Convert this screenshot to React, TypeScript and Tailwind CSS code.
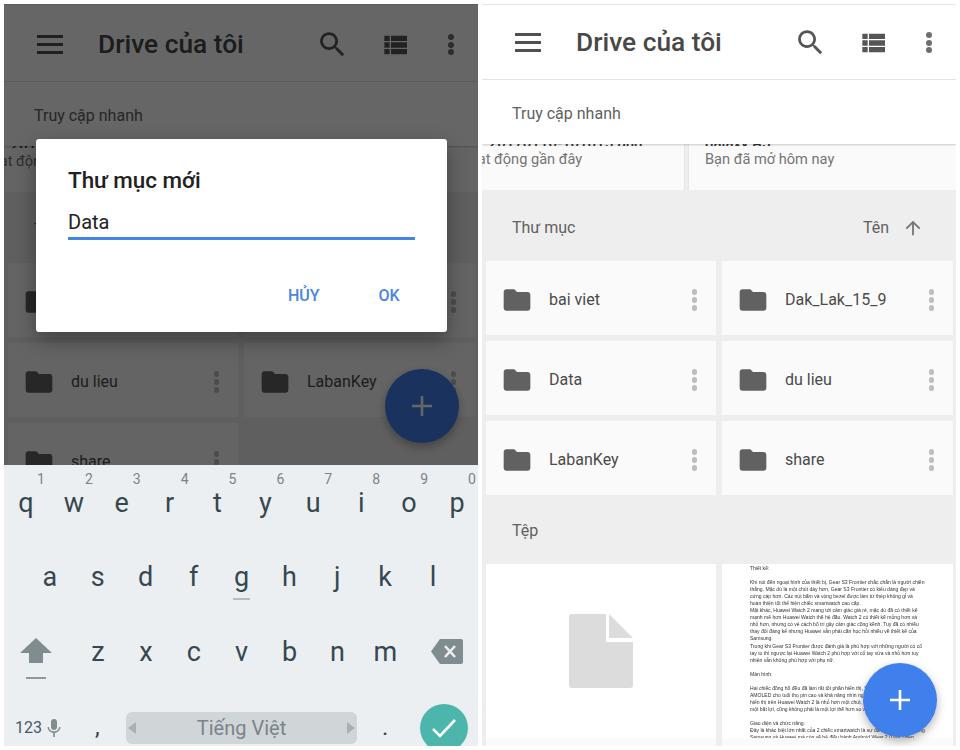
import React from "react";

const FOLDER = "M10 4H4c-1.1 0-1.99.9-1.99 2L2 18c0 1.1.9 2 2 2h16c1.1 0 2-.9 2-2V8c0-1.1-.9-2-2-2h-8l-2-2z";
const SEARCH = "M15.5 14h-.79l-.28-.27C15.41 12.59 16 11.11 16 9.5 16 5.91 13.09 3 9.5 3S3 5.91 3 9.5 5.91 16 9.5 16c1.61 0 3.09-.59 4.23-1.57l.27.28v.79l5 4.99L20.49 19l-4.99-5zm-6 0C7.01 14 5 11.99 5 9.5S7.01 5 9.5 5 14 7.01 14 9.5 11.99 14 9.5 14z";
const LIST = "M4 14h4v-4H4v4zm0 5h4v-4H4v4zM4 9h4V5H4v4zm5 5h12v-4H9v4zm0 5h12v-4H9v4zM9 5v4h12V5H9z";
const UP = "M4 12l1.41 1.41L11 7.83V20h2V7.83l5.58 5.59L20 12l-8-8-8 8z";

const DOC = [
  "Thiết kế:",
  "\u00a0",
  "Khi nói đến ngoại hình của thiết bị, Gear S3 Frontier chắc chắn là người chiến",
  "thắng. Mặc dù là một chút dày hơn, Gear S3 Frontier có kiểu dáng đẹp và",
  "cứng cáp hơn. Các nút bấm và vòng bezel được làm từ thép không gỉ và",
  "hoàn thiện tốt thể hiện chiếc smartwatch cao cấp.",
  "Mặt khác, Huawei Watch 2 mang tới cảm giác giá rẻ, mặc dù đã có thiết kế",
  "mạnh mẽ hơn Huawei Watch thế hệ đầu. Watch 2 có thiết kế mỏng hơn và",
  "nhỏ hơn, nhưng có vẻ cách bố trí gây cảm giác cồng kềnh. Tuy đã có nhiều",
  "thay đổi đáng kể nhưng Huawei vẫn phải cần học hỏi nhiều về thiết kế của",
  "Samsung.",
  "Trong khi Gear S3 Frontier được đánh giá là phù hợp với những người có cổ",
  "tay to thì ngược lại Huawei Watch 2 phù hợp với cổ tay vừa và nhỏ hơn tuy",
  "nhiên vẫn không phù hợp với phụ nữ.",
  "\u00a0",
  "Màn hình:",
  "\u00a0",
  "Hai chiếc đồng hồ đều đã làm rất tốt phần hiển thị, Samsung sử dụng màn hình",
  "AMOLED cho tuổi thọ pin cao và khả năng nhìn ngoài trời tốt. Kích thước",
  "hiển thị trên Huawei Watch 2 là nhỏ hơn một chút, tuy nhiên đây không phải",
  "một bất lợi, cũng không phải là một lợi thế hơn so với đối thủ.",
  "\u00a0",
  "Giao diện và chức năng:",
  "Đây là khác biệt lớn nhất của 2 chiếc smartwatch là sự đa dạng của ứng dụng",
  "Samsung và Huawei mà còn về hệ điều hành Android Wear 2.0 với Tizen.",
];

function Dots({ className }: { className: string }) {
  return (
    <div className="flex flex-col gap-[2.5px]">
      <span className={"block w-[5.5px] h-[5.5px] rounded-full " + className} />
      <span className={"block w-[5.5px] h-[5.5px] rounded-full " + className} />
      <span className={"block w-[5.5px] h-[5.5px] rounded-full " + className} />
    </div>
  );
}

function FolderCard({ name }: { name: string }) {
  return (
    <div className="h-[74px] bg-[#fafafa] flex items-center pl-[15px] pr-[19px] pt-[4px]">
      <svg width="32" height="32" viewBox="0 0 24 24" className="shrink-0 fill-[#616161]">
        <path d={FOLDER} />
      </svg>
      <span className="ml-[16px] text-[16px] text-[#4a4a4a]">{name}</span>
      <div className="ml-auto">
        <Dots className="bg-[#bdbdbd]" />
      </div>
    </div>
  );
}

function Fab({ className }: { className: string }) {
  return (
    <div className={"absolute w-[74px] h-[74px] rounded-full bg-[#3f80ec] flex items-center justify-center shadow-[0_4px_10px_rgba(0,0,0,0.3)] " + className}>
      <svg width="20" height="20" viewBox="0 0 20 20" className="stroke-white" strokeWidth="2.6">
        <path d="M10 0v20M0 10h20" />
      </svg>
    </div>
  );
}

function Drive({ folders, shift }: { folders: string[]; shift: boolean }) {
  return (
    <div className="flex flex-col bg-[#eeeeee]">
      <header className={(shift ? "h-[78px] pt-[3px]" : "h-[76px] pt-[1px]") + " shrink-0 bg-white border-t border-b border-[#e6e6e6] flex items-center pl-[33px] pr-[24px]"}>
        <div className="flex flex-col gap-[5px] w-[26px]">
          <span className="block h-[3px] bg-[#515151]" />
          <span className="block h-[3px] bg-[#515151]" />
          <span className="block h-[3px] bg-[#515151]" />
        </div>
        <h1 className="ml-[35px] text-[26.3px] font-medium text-[#484848] leading-none">Drive của tôi</h1>
        <svg width="33" height="33" viewBox="0 0 24 24" className="ml-[72px] fill-[#555555]"><path d={SEARCH} /></svg>
        <svg width="32" height="32" viewBox="0 0 24 24" className="ml-[30px] fill-[#555555]"><path d={LIST} /></svg>
        <div className="ml-auto">
          <div className="flex flex-col gap-[1.5px]">
            <span className="block w-[6px] h-[6px] rounded-full bg-[#6e6e6e]" />
            <span className="block w-[6px] h-[6px] rounded-full bg-[#6e6e6e]" />
            <span className="block w-[6px] h-[6px] rounded-full bg-[#6e6e6e]" />
          </div>
        </div>
      </header>
      <div className="relative z-10 shrink-0 h-[64px] bg-white flex items-center pl-[30px] pt-[4px] text-[16px] text-[#616161] shadow-[0_1px_2px_rgba(0,0,0,0.2)]">
        Truy cập nhanh
      </div>
      <div className="shrink-0 h-[46px] flex gap-[5px] overflow-hidden">
        <div className="w-[202px] shrink-0 bg-[#fafafa] shadow-[0_1px_1px_rgba(0,0,0,0.2)] overflow-hidden">
          <div className="h-[2px] overflow-hidden">
            <div className="-mt-[12px] text-[15px] font-medium text-[#333333] whitespace-nowrap">_20170110-101015.png</div>
          </div>
          <div className="mt-[3px] -ml-[23px] text-[14.6px] text-[#757575] whitespace-nowrap">Hoạt động gần đây</div>
        </div>
        <div className="flex-1 bg-[#fafafa] shadow-[0_1px_1px_rgba(0,0,0,0.2)] pl-[16px] overflow-hidden">
          <div className="h-[2px] overflow-hidden">
            <div className="-mt-[12px] text-[15px] font-medium text-[#333333] whitespace-nowrap">galaxy A5</div>
          </div>
          <div className="mt-[3px] text-[14.6px] text-[#757575] whitespace-nowrap">Bạn đã mở hôm nay</div>
        </div>
      </div>
      <div className="shrink-0 h-[71px] flex items-center pl-[30px] pr-[32px] pt-[4px] text-[16px] text-[#616161]">
        <span>Thư mục</span>
        <span className="ml-auto">Tên</span>
        <svg width="22" height="22" viewBox="0 0 24 24" className="ml-[13px] fill-[#757575]"><path d={UP} /></svg>
      </div>
      <div className="grid grid-cols-[230px_231px] gap-[6px] pl-[4px] shrink-0">
        {folders.map((f) => (
          <FolderCard key={f} name={f} />
        ))}
      </div>
      <div className="shrink-0 h-[69px] flex items-center pl-[30px] pt-[2px] text-[16px] text-[#616161]">Tệp</div>
      <div className="grid grid-cols-[230px_231px] gap-[6px] pl-[4px] shrink-0">
        <div className="h-[182px] bg-[#fafafa]">
          <div className="h-[174px] bg-white flex items-center justify-center">
            <svg width="64" height="74" viewBox="0 0 64 74" className="fill-[#dcdcdc]">
              <path d="M3 0h34v28h27v43a3 3 0 0 1-3 3H3a3 3 0 0 1-3-3V3a3 3 0 0 1 3-3z" />
              <path d="M40 0l24 24H40z" />
            </svg>
          </div>
        </div>
        <div className="h-[182px] bg-[#fafafa]">
          <div className="h-[174px] bg-white overflow-hidden pl-[28px] pt-[1px] blur-[0.4px]">
            {DOC.map((l, i) => (
              <div key={i} className="h-[7.05px] text-[5.05px] leading-[7.05px] text-[#333333] whitespace-nowrap font-['Liberation_Sans',sans-serif]">
                {l}
              </div>
            ))}
          </div>
        </div>
      </div>
    </div>
  );
}

function KeyCap({ ch, hint, mark }: { ch: string; hint?: string; mark?: boolean }) {
  return (
    <div className="w-[47.9px] shrink-0 flex flex-col items-center">
      {hint && <span className="w-full text-right pr-[5px] text-[14px] leading-[16px] text-[#78848a]">{hint}</span>}
      <span className="text-[27px] leading-[32px] text-[#37474f]">{ch}</span>
      {mark && <span className="block w-[17px] h-[2px] bg-[#b4bcc0] mt-[5px]" />}
    </div>
  );
}

function Keyboard() {
  const top = "qwertyuiop".split("");
  const nums = "1234567890".split("");
  return (
    <div className="h-[281px] bg-[#eceff1] flex flex-col overflow-hidden">
      <div className="h-[75px] shrink-0 flex -ml-[2px] pt-[6px]">
        {top.map((c, i) => (
          <KeyCap key={c} ch={c} hint={nums[i]} />
        ))}
      </div>
      <div className="h-[75px] shrink-0 flex pl-[22px] pt-[21px]">
        {"asdfghjkl".split("").map((c) => (
          <KeyCap key={c} ch={c} mark={c === "g"} />
        ))}
      </div>
      <div className="h-[75px] shrink-0 flex pt-[21px]">
        <div className="w-[70px] shrink-0 flex flex-col items-center pr-[7px] pt-[2px]">
          <svg width="32" height="26" viewBox="0 0 32 26" className="fill-[#7f8c90]"><path d="M16 0l16 15H23v10H9V15H0z" /></svg>
          <span className="block w-[20px] h-[2px] bg-[#8e999d] mt-[13px]" />
        </div>
        {"zxcvbnm".split("").map((c) => (
          <KeyCap key={c} ch={c} />
        ))}
        <div className="flex-1 flex justify-end pr-[15px] pt-[3px]">
          <svg width="32" height="25" viewBox="0 0 32 25">
            <path className="fill-[#7f8c90]" d="M9 0h21a2 2 0 0 1 2 2v21a2 2 0 0 1-2 2H9L0 12.500z" />
            <path d="M14 7l10 11M24 7L14 18" className="stroke-[#eceff1]" strokeWidth="2.6" />
          </svg>
        </div>
      </div>
      <div className="h-[56px] shrink-0 flex">
        <div className="w-[122px] shrink-0 pl-[11px] pt-[28px] flex items-start">
          <span className="text-[16px] leading-[20px] text-[#455a64]">123</span>
          <svg width="14" height="18" viewBox="0 0 14 18" className="ml-[5px] mt-[1px] fill-[#7f8c90]">
            <path d="M7 11a3 3 0 0 0 3-3V3a3 3 0 0 0-6 0v5a3 3 0 0 0 3 3z" />
            <path d="M12 8c0 2.700-2.300 4.300-5 4.300S2 10.700 2 8H.6c0 3.200 2.600 5.500 5.600 5.900V18h1.600v-4.100c3-.4 5.600-2.700 5.600-5.900z" />
          </svg>
          <span className="ml-[34px] -mt-[3px] text-[24px] leading-[24px] text-[#37474f]">,</span>
        </div>
        <div className="w-[231px] h-[32px] shrink-0 mt-[22px] rounded-[6px] bg-[#d0d5d8] flex items-center justify-between px-[2px]">
          <svg width="8" height="12" viewBox="0 0 8 12" className="fill-[#a9b1b5]"><path d="M8 0v12L0 6z" /></svg>
          <span className="text-[20px] text-[#78848a]">Tiếng Việt</span>
          <svg width="8" height="12" viewBox="0 0 8 12" className="fill-[#a9b1b5]"><path d="M0 0v12l8-6z" /></svg>
        </div>
        <span className="ml-[25px] w-[12px] mt-[25px] text-[24px] leading-[24px] text-[#37474f]">.</span>
        <div className="ml-[26px] mt-[14px] w-[48px] h-[48px] shrink-0 rounded-full bg-[#4db6ac] flex items-center justify-center">
          <svg width="24" height="20" viewBox="0 0 24 20" className="stroke-white fill-none" strokeWidth="2.6"><path d="M1 11l7 7L23 2" /></svg>
        </div>
      </div>
    </div>
  );
}

export default function App() {
  return (
    <div className="w-[960px] h-[750px] bg-white pt-[4px] pl-[4px] flex gap-[4px] overflow-hidden font-['Roboto',sans-serif]">
      <div className="w-[474px] h-[742px] flex flex-col overflow-hidden">
        <div className="relative h-[461px] shrink-0 overflow-hidden">
          <Drive shift folders={["bai viet", "Dak_Lak_15_9", "du lieu", "LabanKey", "share"]} />
          <Fab className="left-[381px] top-[365px]" />
          <div className="absolute inset-0 z-20 bg-black/60" />
          <div className="absolute z-30 left-[32px] top-[135px] w-[411px] h-[193px] bg-white rounded-[3px] shadow-[0_8px_20px_rgba(0,0,0,0.35)] pl-[32px] pr-[32px] flex flex-col">
            <div className="mt-[25px] text-[22.4px] leading-[32px] font-medium text-[#212121]">Thư mục mới</div>
            <div className="mt-[11px] pt-[2px] text-[20px] leading-[26px] text-[#212121] border-b-[3px] border-[#4285e4] h-[33px]">Data</div>
            <div className="mt-[46px] flex text-[16px] font-medium text-[#4a84e0] leading-[20px]">
              <span className="ml-[220px]">HỦY</span>
              <span className="ml-[59px]">OK</span>
            </div>
          </div>
        </div>
        <Keyboard />
      </div>
      <div className="relative w-[474px] h-[742px] overflow-hidden">
        <Drive shift={false} folders={["bai viet", "Dak_Lak_15_9", "Data", "du lieu", "LabanKey", "share"]} />
        <Fab className="left-[381px] bottom-[9px]" />
      </div>
    </div>
  );
}
